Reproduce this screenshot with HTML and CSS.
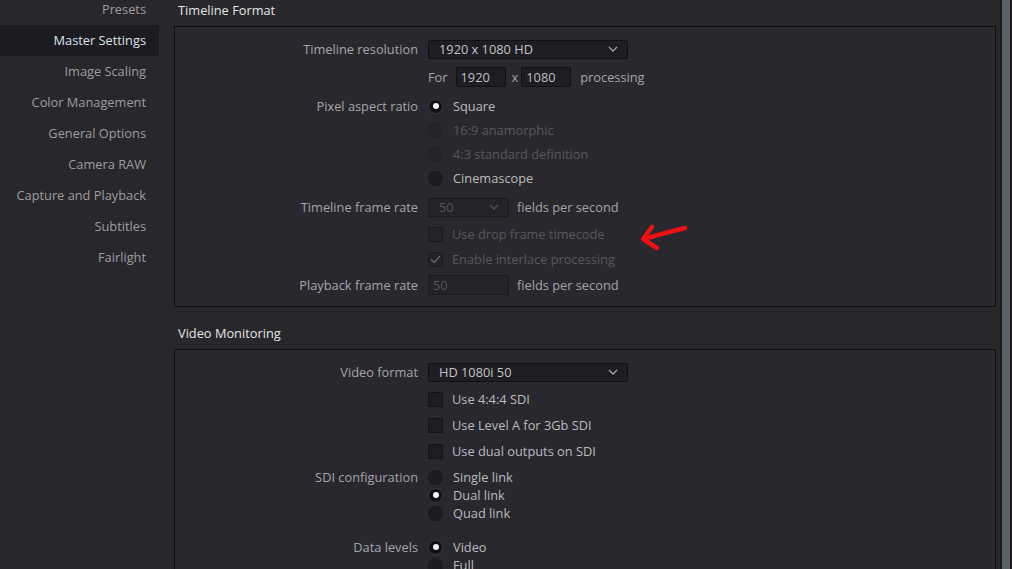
FILE: index.html
```html
<!DOCTYPE html>
<html>
<head>
	<title>Project Settings - Master Settings</title>
	<meta charset="utf-8">
	<meta name="viewport" content="width=device-width, initial-scale=1">

	<link rel="stylesheet" href="styles.css">
</head>
<body>

	<div class="app">

		<!-- Settings categories -->
		<nav class="sidebar">
			<div class="nav-item">Presets</div>
			<div class="nav-item active">Master Settings</div>
			<div class="nav-item">Image Scaling</div>
			<div class="nav-item">Color Management</div>
			<div class="nav-item">General Options</div>
			<div class="nav-item">Camera RAW</div>
			<div class="nav-item">Capture and Playback</div>
			<div class="nav-item">Subtitles</div>
			<div class="nav-item">Fairlight</div>
		</nav>

		<main class="content">

			<section class="section">
				<h2 class="section-title">Timeline Format</h2>
				<div class="panel panel-timeline">

					<div class="row h28">
						<div class="label">Timeline resolution</div>
						<div class="control">
							<div class="select select-wide">
								<span>1920 x 1080 HD</span>
								<svg class="chevron" width="10" height="6" viewBox="0 0 10 6"><path d="M1 1l4 4 4-4" fill="none" stroke="currentColor" stroke-width="1.4"/></svg>
							</div>
						</div>
					</div>

					<div class="row h28">
						<div class="label"></div>
						<div class="control">
							<span class="text">For</span>
							<div class="input input-small">1920</div>
							<span class="text times">x</span>
							<div class="input input-small input-second">1080</div>
							<span class="text after">processing</span>
						</div>
					</div>

					<div class="row h24 gap-top">
						<div class="label">Pixel aspect ratio</div>
						<div class="control">
							<span class="radio checked"></span>
							<span class="option">Square</span>
						</div>
					</div>
					<div class="row h24 disabled">
						<div class="label"></div>
						<div class="control">
							<span class="radio"></span>
							<span class="option">16:9 anamorphic</span>
						</div>
					</div>
					<div class="row h24 disabled">
						<div class="label"></div>
						<div class="control">
							<span class="radio"></span>
							<span class="option">4:3 standard definition</span>
						</div>
					</div>
					<div class="row h24">
						<div class="label"></div>
						<div class="control">
							<span class="radio"></span>
							<span class="option">Cinemascope</span>
						</div>
					</div>

					<div class="row h28 gap-top">
						<div class="label">Timeline frame rate</div>
						<div class="control">
							<div class="select select-narrow disabled">
								<span>50</span>
								<svg class="chevron" width="10" height="6" viewBox="0 0 10 6"><path d="M1 1l4 4 4-4" fill="none" stroke="currentColor" stroke-width="1.4"/></svg>
							</div>
							<span class="text after-narrow">fields per second</span>
						</div>
					</div>

					<div class="row h26 disabled">
						<div class="label"></div>
						<div class="control">
							<span class="checkbox"></span>
							<span class="option">Use drop frame timecode</span>
						</div>
					</div>
					<div class="row h24 disabled">
						<div class="label"></div>
						<div class="control">
							<span class="checkbox">
								<svg width="11" height="9" viewBox="0 0 11 9"><path d="M1 4.5l3 3 6-6.5" fill="none" stroke="currentColor" stroke-width="1.3"/></svg>
							</span>
							<span class="option">Enable interlace processing</span>
						</div>
					</div>

					<div class="row h28">
						<div class="label">Playback frame rate</div>
						<div class="control">
							<div class="input input-narrow disabled">50</div>
							<span class="text after-narrow">fields per second</span>
						</div>
					</div>

				</div>
			</section>

			<section class="section section-next">
				<h2 class="section-title">Video Monitoring</h2>
				<div class="panel panel-video">

					<div class="row h28">
						<div class="label">Video format</div>
						<div class="control">
							<div class="select select-wide">
								<span>HD 1080i 50</span>
								<svg class="chevron" width="10" height="6" viewBox="0 0 10 6"><path d="M1 1l4 4 4-4" fill="none" stroke="currentColor" stroke-width="1.4"/></svg>
							</div>
						</div>
					</div>

					<div class="row h26">
						<div class="label"></div>
						<div class="control">
							<span class="checkbox"></span>
							<span class="option">Use 4:4:4 SDI</span>
						</div>
					</div>
					<div class="row h26">
						<div class="label"></div>
						<div class="control">
							<span class="checkbox"></span>
							<span class="option">Use Level A for 3Gb SDI</span>
						</div>
					</div>
					<div class="row h26">
						<div class="label"></div>
						<div class="control">
							<span class="checkbox"></span>
							<span class="option">Use dual outputs on SDI</span>
						</div>
					</div>

					<div class="row h18 gap-top-4">
						<div class="label">SDI configuration</div>
						<div class="control">
							<span class="radio"></span>
							<span class="option">Single link</span>
						</div>
					</div>
					<div class="row h18">
						<div class="label"></div>
						<div class="control">
							<span class="radio checked"></span>
							<span class="option">Dual link</span>
						</div>
					</div>
					<div class="row h18">
						<div class="label"></div>
						<div class="control">
							<span class="radio"></span>
							<span class="option">Quad link</span>
						</div>
					</div>

					<div class="row h18 gap-top-16">
						<div class="label">Data levels</div>
						<div class="control">
							<span class="radio checked"></span>
							<span class="option">Video</span>
						</div>
					</div>
					<div class="row h18">
						<div class="label"></div>
						<div class="control">
							<span class="radio"></span>
							<span class="option">Full</span>
						</div>
					</div>

				</div>
			</section>

		</main>

		<div class="scrollbar">
			<div class="scroll-thumb"></div>
		</div>

	</div>

	<!-- Red annotation arrow drawn over the screenshot -->
	<svg class="annotation" width="60" height="40" viewBox="0 0 60 40">
		<g fill="none" stroke="#ee1111" stroke-width="4.5" stroke-linecap="round" stroke-linejoin="round">
			<path d="M47 8 Q30 12 6 19"/>
			<path d="M14 7 L5 19 L19 28"/>
		</g>
	</svg>

</body>
</html>
```

FILE: styles.css
```css
*,
*:before,
*:after {
	box-sizing: border-box;
}

html,
body {
	margin: 0;
	height: 100%;
	overflow: hidden;
}

body {
	background-color: #28272c;
	color: #a8a8ac;
	font-family: "Open Sans", "Noto Sans", sans-serif;
	font-size: 12.8px;
	line-height: 18px;
}

.app {
	display: flex;
	height: 569px;
}

/**
 * Sidebar
 */
.sidebar {
	flex: 0 0 159px;
	margin-top: -6px;
}

.nav-item {
	height: 31px;
	line-height: 31px;
	padding-right: 13px;
	text-align: right;
	color: #9d9da1;
	white-space: nowrap;
}

.nav-item.active {
	background-color: #1c1b1f;
	color: #dde2ea;
}

/**
 * Main content
 */
.content {
	flex: 1;
	padding: 0 4px 0 15px;
	overflow: hidden;
}

.section-title {
	margin: 0 0 6px;
	padding-left: 4px;
	font-size: 12.8px;
	font-weight: normal;
	line-height: 20px;
	color: #e4e4e6;
}

.section-next {
	margin-top: 16px;
}

.panel {
	background-color: #29282e;
	border: 1px solid #0e0e10;
	padding-top: 8px;
}

.panel-timeline {
	height: 281px;
}

.panel-video {
	height: 240px;
}

.row {
	display: flex;
	align-items: center;
}

.h18 { height: 18px; }
.h24 { height: 24px; }
.h26 { height: 26px; }
.h28 { height: 28px; }

.gap-top { margin-top: 3px; }
.gap-top-4 { margin-top: 4px; }
.gap-top-16 { margin-top: 16px; }

.label {
	flex: 0 0 243px;
	text-align: right;
	color: #a5a5a9;
	white-space: nowrap;
}

.control {
	display: flex;
	align-items: center;
	margin-left: 10px;
	white-space: nowrap;
}

.text {
	color: #a5a5a9;
}

.times {
	margin-left: 6px;
}

.after {
	margin-left: 9px;
}

.after-narrow {
	margin-left: 8px;
}

.option {
	margin-left: 10px;
	color: #bbbbbf;
}

/**
 * Form controls
 */
.select {
	display: flex;
	align-items: center;
	justify-content: space-between;
	height: 19px;
	padding: 0 9px 0 10px;
	background-color: #1e1d21;
	border: 1px solid #111113;
	border-radius: 2px;
	color: #c4c4c8;
}

.select-wide {
	width: 200px;
}

.select-narrow {
	width: 81px;
}

.chevron {
	color: #a0a0a4;
}

.input {
	height: 20px;
	line-height: 18px;
	padding: 0 4px;
	background-color: #1e1d21;
	border: 1px solid #111113;
	border-radius: 2px;
	color: #bdbdc1;
}

.input-small {
	width: 50px;
	margin-left: 8px;
}

.input-small.input-second {
	margin-left: 3px;
}

.input-narrow {
	width: 81px;
}

.select.disabled,
.input.disabled {
	background-color: #242328;
	border-color: #1a191d;
	color: #56555a;
}

.select.disabled .chevron {
	color: #4e4d52;
}

.radio {
	display: inline-block;
	width: 15px;
	height: 15px;
	border-radius: 50%;
	background-color: #1d1c20;
	border: 1px solid #19181c;
	position: relative;
}

.radio.checked {
	background-color: #101012;
	border-color: #3a393e;
}

.radio.checked:after {
	content: "";
	position: absolute;
	left: 3.5px;
	top: 3.5px;
	width: 6px;
	height: 6px;
	border-radius: 50%;
	background-color: #f2f2f2;
}

.checkbox {
	display: inline-flex;
	align-items: center;
	justify-content: center;
	width: 15px;
	height: 15px;
	background-color: #1e1d21;
	border: 1px solid #141316;
	border-radius: 1px;
	color: #a8a8ac;
}

.checkbox + .option {
	margin-left: 9px;
}

.row.disabled .option {
	color: #58575c;
}

.row.disabled .radio {
	background-color: #252429;
	border-color: #232226;
}

.row.disabled .checkbox {
	background-color: #242328;
	border-color: #1b1a1e;
	color: #67666b;
}

/**
 * Scrollbar
 */
.scrollbar {
	flex: 0 0 12px;
	background-color: #1b1b1e;
	padding-left: 2px;
	padding-right: 2px;
}

.scroll-thumb {
	height: 100%;
	background-color: #5b6068;
}

/**
 * Annotation
 */
.annotation {
	position: absolute;
	left: 638px;
	top: 220px;
}
```
